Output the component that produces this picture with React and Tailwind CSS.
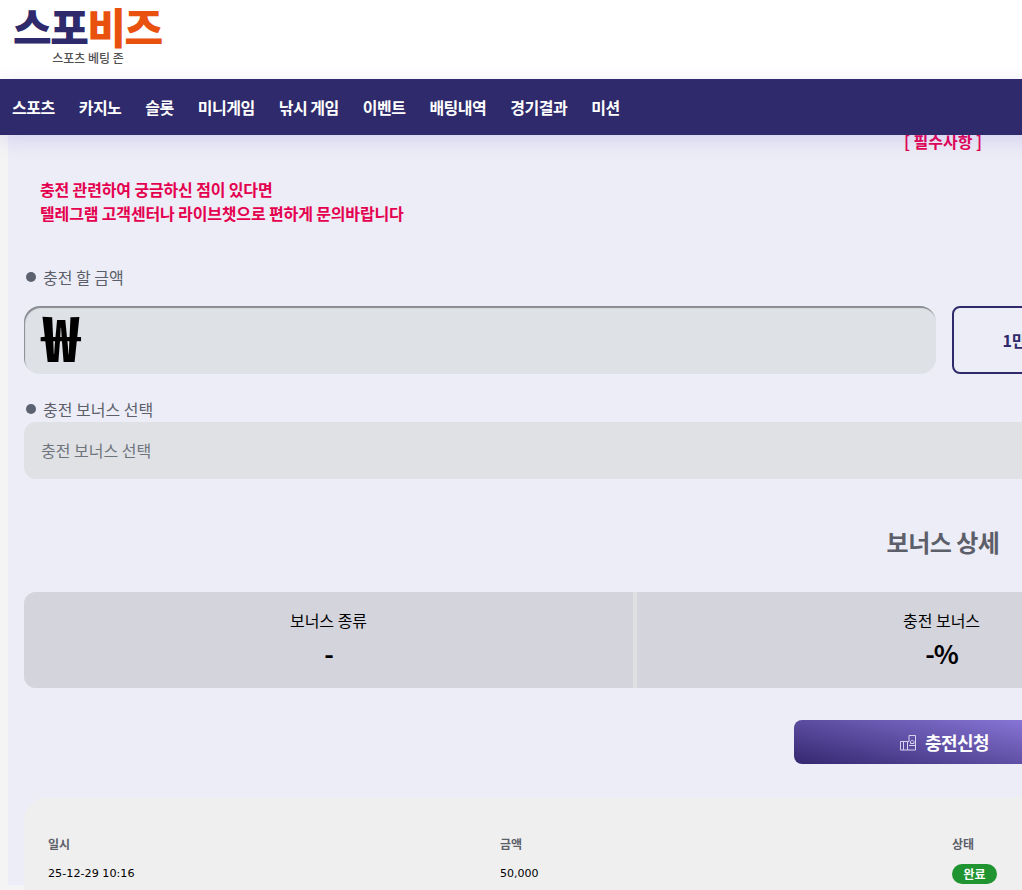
const font = "font-['Noto_Sans_CJK_KR','Noto_Sans',sans-serif]";

const nav = ["스포츠", "카지노", "슬롯", "미니게임", "낚시 게임", "이벤트", "배팅내역", "경기결과", "미션"];

function Label({ children }) {
  return (
    <div className="flex items-center gap-[7px] pl-[2px] text-[16px] leading-[20px] text-[#5c5f6a]">
      <span className="h-[10px] w-[10px] rounded-full bg-[#5c6270]" />
      {children}
    </div>
  );
}

function CoinIcon() {
  return (
    <svg width="17" height="17" viewBox="0 0 17 17" fill="none" stroke="#d9d3f2" strokeWidth="1">
      <path d="M0.5 7.5h7v8.5h-7z" />
      <path d="M3.5 7.5v8.5" />
      <path d="M7.5 7.5h1.5v-6h6.5v14.5h-8" />
      <path d="M9 11.5h6.5" />
      <path d="M10.5 7.5a2 2 0 0 1 3.5 0v2h-3.5z" />
    </svg>
  );
}

export default function App() {
  return (
    <div className={`${font} h-[890px] w-[1022px] overflow-hidden bg-[#f4f4f4]`}>
      <div className="w-[1868px]">
        <header className="h-[79px] bg-white pl-[13px] pt-[3px]">
          <div className="w-[150px]">
            <div className="flex h-[46px] items-center whitespace-nowrap text-[42px] font-black leading-[46px] tracking-[-1.5px]">
              <span className="text-[#2e2a6b]">스포</span>
              <span className="text-[#e9510f]">비즈</span>
            </div>
            <div className="mt-[1px] text-center text-[12px] font-medium leading-[16px] text-[#505050]">스포츠 베팅 존</div>
          </div>
        </header>

        <nav className="relative z-10 flex h-[56px] w-full items-center gap-[24px] bg-[#2e2a6b] pl-[12px] text-[16px] font-bold tracking-[-0.5px] text-white shadow-[0_5px_20px_rgba(110,80,220,0.18)]">
          {nav.map((item) => (
            <span key={item}>{item}</span>
          ))}
        </nav>

        <main className="ml-[8px] h-[755px] bg-[#ecedf6] pl-[16px] pr-[1px]">
          <div className="w-[1838px]">
            <div className="-mt-[5px] text-center text-[16px] font-bold leading-[22px] text-[#e4004f]">[ 필수사항 ]</div>
            <div className="ml-[16px] mt-[25px] text-[16px] font-bold leading-[24px] tracking-[-0.15px] text-[#e4004f]">
              <p>충전 관련하여 궁금하신 점이 있다면</p>
              <p>텔레그램 고객센터나 라이브챗으로 편하게 문의바랍니다</p>
            </div>

            <div className="mt-[42px]">
              <Label>충전 할 금액</Label>
            </div>
            <div className="mt-[19px] flex gap-[16px]">
              <div className="flex h-[68px] w-[912px] items-center rounded-[16px] bg-[#dee1e5] pb-[10px] pl-[18px] text-[62px] font-black leading-none text-black shadow-[inset_1px_2px_1px_#8a8b90]">₩</div>
              <button className="h-[68px] w-[140px] rounded-[8px] border-2 border-[#2e2a6b] text-[16px] font-bold text-[#2e2a6b]">1만원</button>
            </div>

            <div className="mt-[25px]">
              <Label>충전 보너스 선택</Label>
            </div>
            <div className="mt-[3px] flex h-[57px] items-center rounded-[12px] bg-[#dfe1e5] pb-[2px] pl-[17px] text-[16px] text-[#6f747c]">충전 보너스 선택</div>

            <h2 className="mt-[45px] text-center text-[24px] font-bold leading-[36px] tracking-[-0.5px] text-[#5c5f6a]">보너스 상세</h2>

            <div className="mt-[32px] grid h-[96px] w-[1835px] grid-cols-3 gap-[4px] overflow-hidden rounded-[12px] bg-[#e0e0e4]">
              {[["보너스 종류", "-"], ["충전 보너스", "-%"], ["롤링", "-%"]].map(([a, b], i) => (
                <div key={i} className="flex flex-col items-center bg-[#d4d4dc] pt-[17px] text-black">
                  <div className="text-[16px] leading-[22px]">{a}</div>
                  <div className="mt-[5px] text-[26px] font-bold leading-[34px] tracking-[-1px]">{b}</div>
                </div>
              ))}
            </div>

            <div className="mt-[32px] flex justify-center">
              <button className="flex h-[44px] w-[298px] items-center justify-center gap-[8px] rounded-[8px] bg-[linear-gradient(12deg,#35276f_0%,#8674d4_85%,#8674d4_100%)] pl-[3px] text-[18px] font-bold tracking-[-0.5px] text-white">
                <CoinIcon />
                충전신청
              </button>
            </div>

            <div className="mt-[33px] h-[200px] rounded-[24px] bg-[#efefef] px-[24px] pt-[38px] text-[12px]">
              <div className="grid grid-cols-[452px_452px_1fr] font-bold leading-[18px] text-[#5c5f6a]">
                <span>일시</span>
                <span>금액</span>
                <span>상태</span>
              </div>
              <div className="mt-[11px] grid grid-cols-[452px_452px_1fr] items-center leading-[20px] text-black">
                <span className="font-['DejaVu_Sans',sans-serif] text-[11.2px]">25-12-29 10:16</span>
                <span className="font-['DejaVu_Sans',sans-serif] text-[11px]">50,000</span>
                <span className="flex h-[20px] w-[45px] items-center justify-center rounded-full bg-[#1f9430] font-bold text-white">완료</span>
              </div>
            </div>
          </div>
        </main>
      </div>
    </div>
  );
}
